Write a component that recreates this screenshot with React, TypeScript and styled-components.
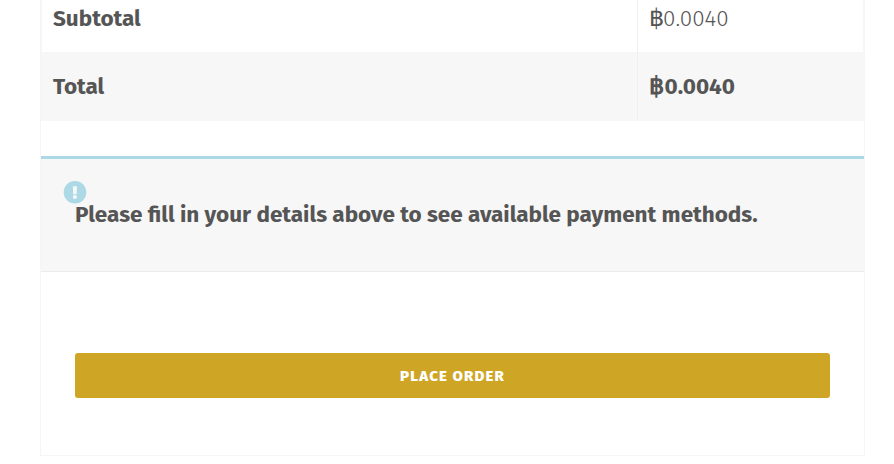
import React from "react";
import styled, { createGlobalStyle } from "styled-components";

const GlobalStyle = createGlobalStyle`
  *, *::before, *::after { box-sizing: border-box; }
  body {
    margin: 0;
    background: #fff;
    color: #555;
    font-family: "Fira Sans", "Noto Sans", sans-serif;
  }
`;

const Page = styled.main`
  height: 464px;
  padding: 0 29px 0 40px;
  overflow: hidden;
`;

const OrderBox = styled.section`
  display: flex;
  flex-direction: column;
  height: 456px;
  border: 1px solid #f5f5f5;
  border-top: 0;
`;

const Totals = styled.div`
  display: flex;
  flex-direction: column;
  margin-bottom: 35px;
`;

const Row = styled.div<{ $shaded?: boolean }>`
  display: grid;
  grid-template-columns: 597px 1fr;
  height: ${(p) => (p.$shaded ? 69 : 52)}px;
  background: ${(p) => (p.$shaded ? "#f7f7f7" : "#fff")};
  border: solid #f7f7f7;
  border-width: 0 1px;
  margin-right: ${(p) => (p.$shaded ? -1 : 0)}px;
`;

const Cell = styled.div<{ $top: number; $weight: number }>`
  padding: ${(p) => p.$top}px 0 0 11px;
  font-size: 22.5px;
  font-weight: ${(p) => p.$weight};
  line-height: 30px;
  white-space: nowrap;

  & + & {
    padding-left: 12px;
    margin-left: -2px;
    border-left: 1px solid #f0f0f0;
  }
`;

const Currency = styled.span<{ $bold?: boolean }>`
  display: inline-block;
  width: ${(p) => (p.$bold ? 15.1 : 13.6)}px;
  margin-left: -0.6px;
  font-family: "Liberation Sans", sans-serif;
  font-size: 24px;
  font-weight: ${(p) => (p.$bold ? 700 : 500)};
  letter-spacing: -2px;
  line-height: 20px;
`;

const Notice = styled.div`
  position: relative;
  height: 116px;
  padding: 41px 0 0 34px;
  background: #f7f7f7;
  border-top: 3px solid #add8e6;
  border-bottom: 1px solid #ececec;
  font-size: 22.5px;
  font-weight: 700;
  line-height: 30px;
  white-space: nowrap;
`;

const NoticeIcon = styled.svg`
  position: absolute;
  left: 22px;
  top: 21px;
  width: 24px;
  height: 24px;
`;

const OrderButton = styled.button`
  height: 45px;
  margin: 81px 34px 0;
  padding: 0;
  border: 0;
  border-radius: 3px;
  background: #cfa526;
  color: #fff;
  font: 800 15px/20px "Fira Sans", "Noto Sans", sans-serif;
  letter-spacing: 1.15px;
`;

export default function App() {
  return (
    <Page>
      <GlobalStyle />
      <OrderBox>
        <Totals>
          <Row>
            <Cell $top={4} $weight={700}>Subtotal</Cell>
            <Cell $top={4} $weight={300}><Currency>฿</Currency>0.0040</Cell>
          </Row>
          <Row $shaded>
            <Cell $top={20} $weight={700}>Total</Cell>
            <Cell $top={20} $weight={700}><Currency $bold>฿</Currency>0.0040</Cell>
          </Row>
        </Totals>
        <Notice>
          <NoticeIcon viewBox="0 0 24 24" aria-hidden="true">
            <circle cx="12" cy="12.2" r="11.3" fill="#add8e6" />
            <path d="M9.8 6.2h4.2l-.4 8h-3.4z" fill="#f7f7f7" />
            <circle cx="11.9" cy="17" r="2.1" fill="#f7f7f7" />
          </NoticeIcon>
          Please fill in your details above to see available payment methods.
        </Notice>
        <OrderButton type="button">PLACE ORDER</OrderButton>
      </OrderBox>
    </Page>
  );
}
